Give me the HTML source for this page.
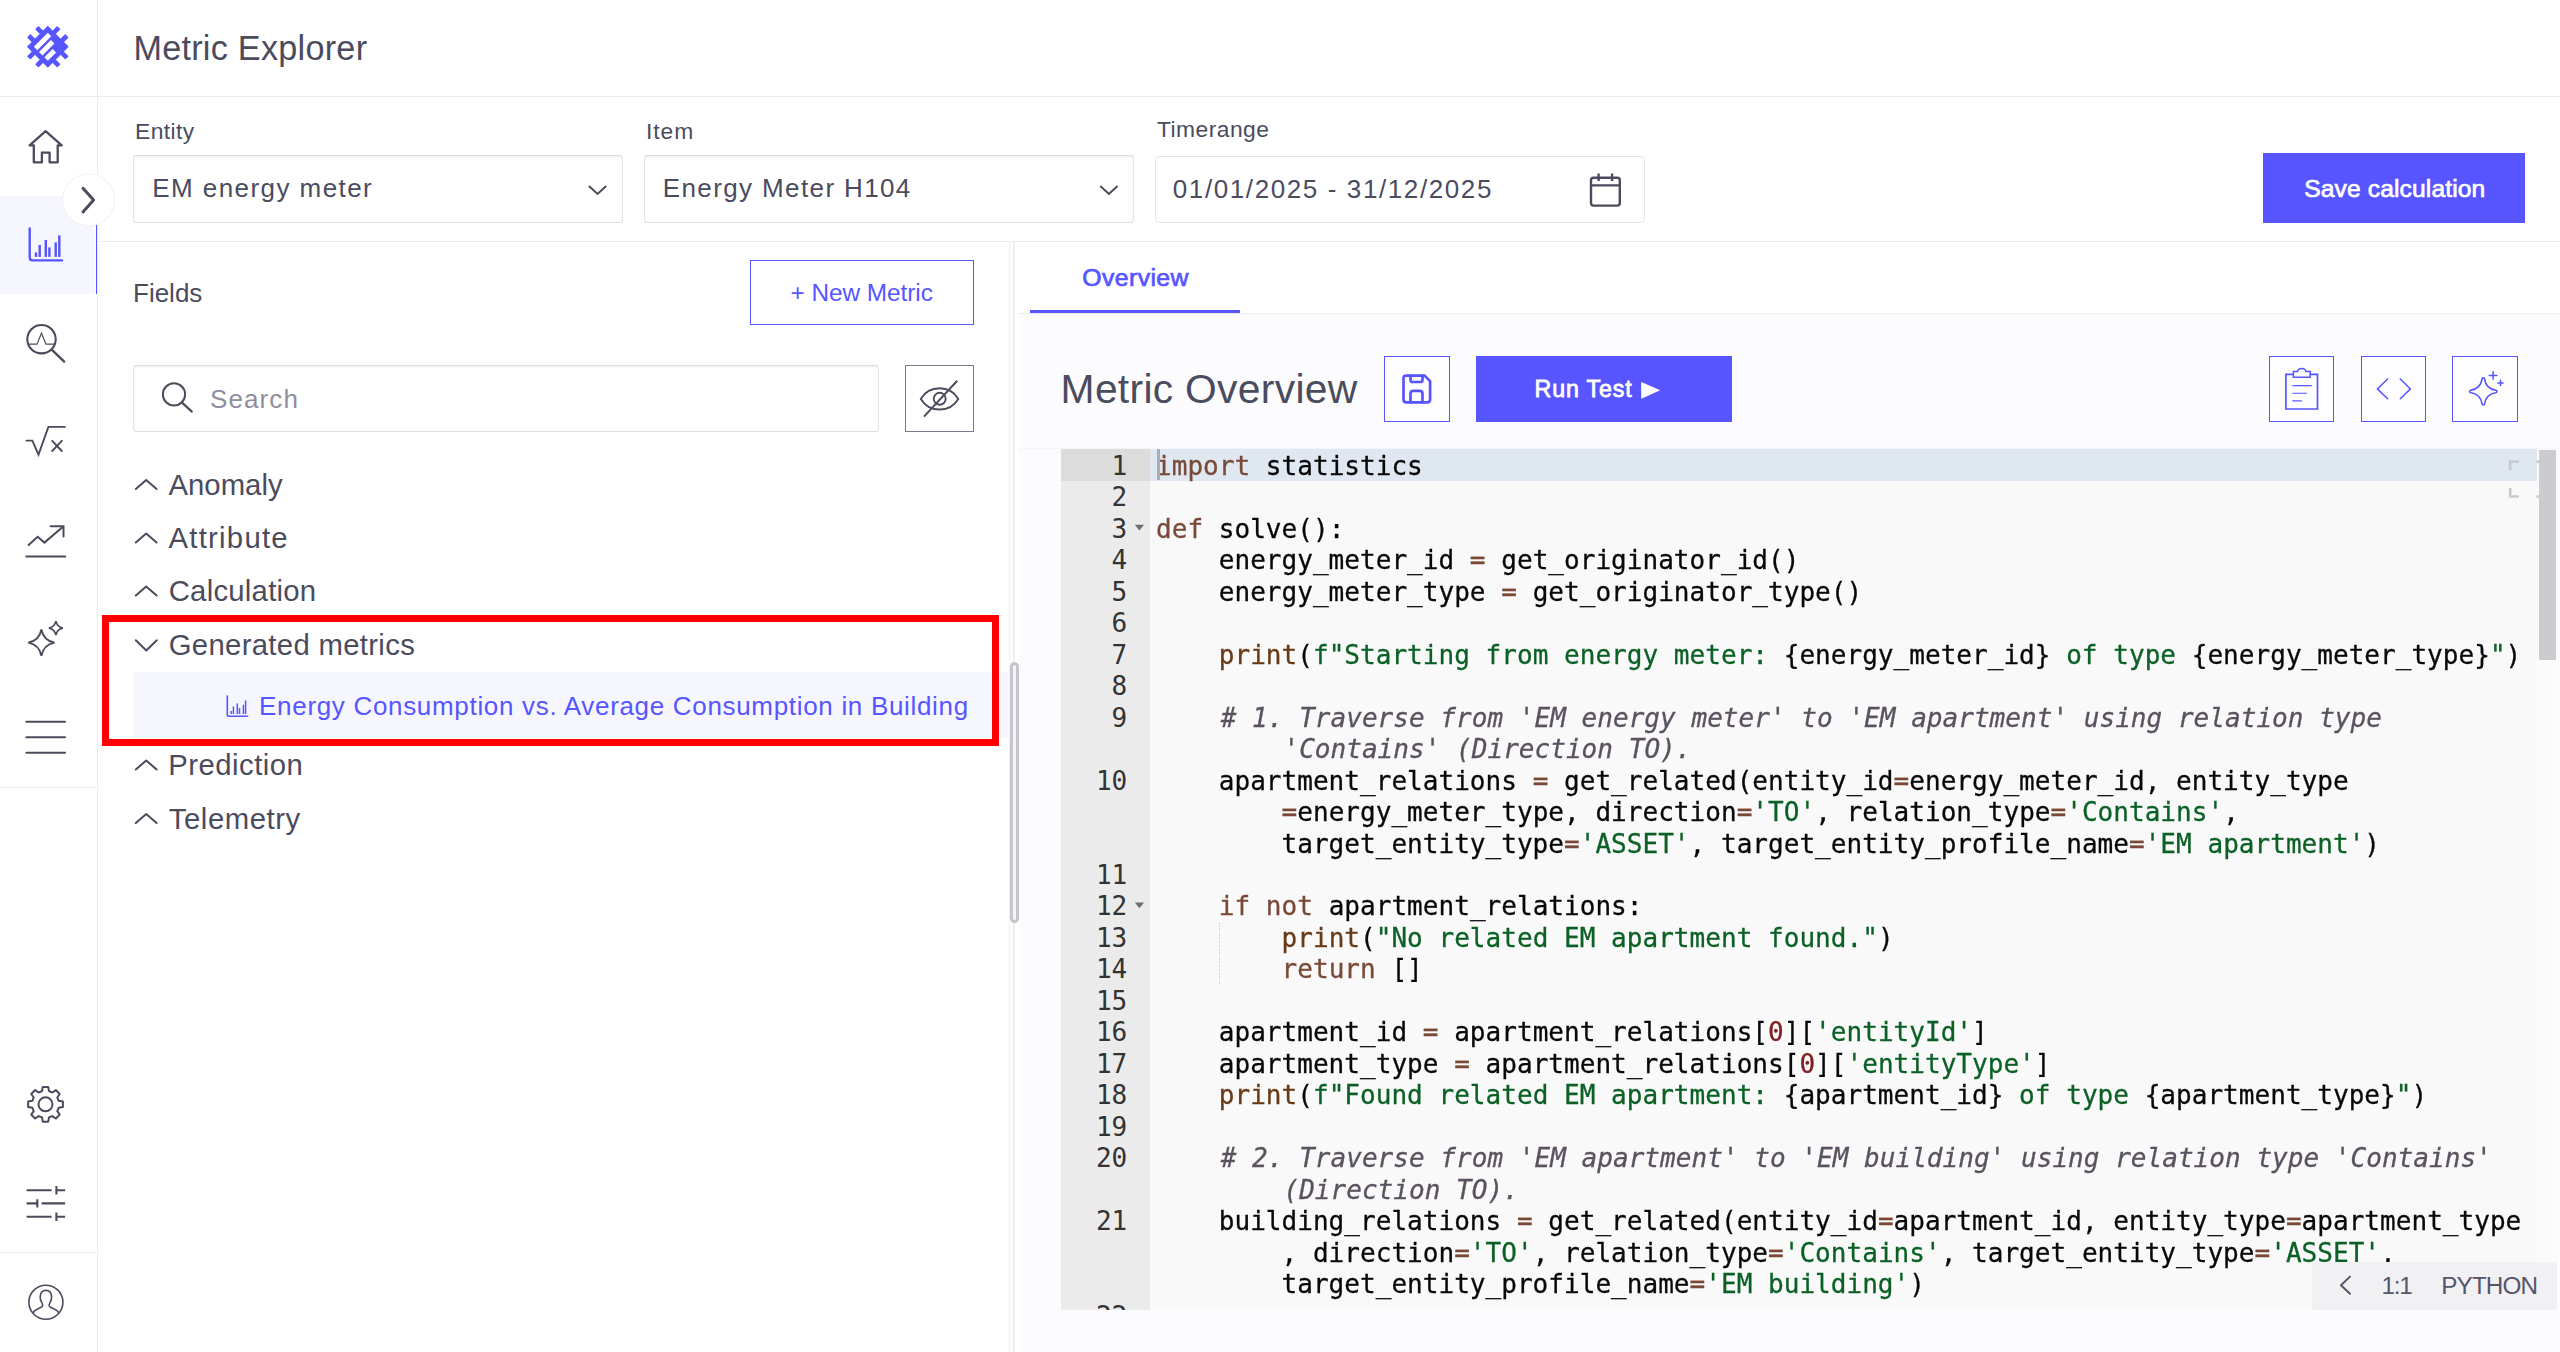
<!DOCTYPE html>
<html lang="en"><head><meta charset="utf-8"><title>Metric Explorer</title>
<style>
html,body{margin:0;padding:0;}
body{width:2560px;height:1352px;overflow:hidden;background:#fff;position:relative;font-family:"Liberation Sans",Arial,sans-serif;color:#4b4b5e;}
.t{position:absolute;white-space:nowrap;display:block;margin:0;padding:0;font-weight:400;}
.b{position:absolute;box-sizing:border-box;}
svg{position:absolute;left:0;top:0;overflow:visible;}
#code{position:absolute;left:1061px;top:449px;width:1496px;height:861px;overflow:hidden;background:#f9f9f9;}
#gut{position:absolute;left:0;top:0;width:89px;height:861px;background:#ebebeb;}
.r{position:absolute;left:0;height:31.475px;line-height:31.475px;white-space:pre;font-family:"DejaVu Sans Mono","Liberation Mono",monospace;font-size:27.4px;color:#080808;-webkit-text-stroke:0.3px;}
.ln{position:absolute;left:0;width:66.3px;text-align:right;height:31.475px;line-height:31.475px;font-family:"DejaVu Sans Mono","Liberation Mono",monospace;font-size:27.4px;color:#333;white-space:pre;transform:scaleX(0.9516);transform-origin:100% 0;}
#rows{position:absolute;left:95px;top:0;transform:scaleX(0.9516);transform-origin:0 0;}
#lns{position:absolute;left:0;top:0;width:66.3px;}
.k{color:#794938}.s{color:#0b6125}.c{color:#5a525f;font-style:italic;position:relative;left:2px}.n{color:#811f24}.f{color:#693a17}

</style></head><body>
<nav aria-label="Main navigation">
<div class="b" style="left:97px;top:0px;width:1px;height:1352px;background:#ededf0;"></div>
<div class="b" style="left:0px;top:787px;width:97px;height:1px;background:#ededf0;"></div>
<div class="b" style="left:0px;top:1252px;width:97px;height:1px;background:#ededf0;"></div>
<div class="b" style="left:0px;top:196px;width:95.4px;height:98px;background:#f6f6ff;"></div>
<div class="b" style="left:96px;top:196px;width:1.4px;height:98px;background:#5755ff;"></div>
</nav>
<header>
<div class="b" style="left:0px;top:96px;width:2560px;height:1px;background:#ededf0;"></div>
<h1 class="t" style="left:133.40px;top:30.65px;font-size:34.2px;line-height:34.2px;color:#4b4b5e;letter-spacing:0.27px;">Metric Explorer</h1>
</header>
<section aria-label="Filters">
<div class="b" style="left:98px;top:241px;width:2462px;height:1px;background:#ededf0;"></div>
<label class="t" style="left:135.10px;top:119.70px;font-size:22.8px;line-height:22.8px;color:#4b4b5e;letter-spacing:0.41px;">Entity</label>
<label class="t" style="left:645.90px;top:119.70px;font-size:22.8px;line-height:22.8px;color:#4b4b5e;letter-spacing:1.0px;">Item</label>
<label class="t" style="left:1156.90px;top:118.40px;font-size:22.8px;line-height:22.8px;color:#4b4b5e;letter-spacing:0.49px;">Timerange</label>
<div class="b" style="left:133px;top:154.8px;width:490px;height:68.2px;background:#fff;border:1px solid #e4e4e9;border-top-color:#dcdce2;border-bottom-color:#dedee4;border-radius:3px;box-shadow:inset 0 1px 2px rgba(60,60,90,0.09);"></div>
<div class="b" style="left:644px;top:154.8px;width:490px;height:68.2px;background:#fff;border:1px solid #e4e4e9;border-top-color:#dcdce2;border-bottom-color:#dedee4;border-radius:3px;box-shadow:inset 0 1px 2px rgba(60,60,90,0.09);"></div>
<div class="b" style="left:1155px;top:155.5px;width:490px;height:67px;background:#fff;border:1px solid #e6e6ea;border-radius:4px;"></div>
<span class="t" style="left:152.20px;top:175.19px;font-size:26px;line-height:26px;color:#4b4b5e;letter-spacing:1.44px;">EM energy meter</span>
<span class="t" style="left:662.80px;top:175.19px;font-size:26px;line-height:26px;color:#4b4b5e;letter-spacing:1.38px;">Energy Meter H104</span>
<span class="t" style="left:1172.80px;top:176.19px;font-size:26px;line-height:26px;color:#4b4b5e;letter-spacing:1.6px;">01/01/2025 - 31/12/2025</span>
<div class="b" style="left:2263px;top:153px;width:262px;height:70px;background:#5755ff;"></div>
<span class="t" style="left:2304.30px;top:176.68px;font-size:24.6px;line-height:24.6px;color:#fff;letter-spacing:0.12px;-webkit-text-stroke:0.7px #fff;">Save calculation</span>
</section>
<div class="b" style="left:1009px;top:242px;width:1px;height:1110px;background:#f0f0f2;"></div>
<div class="b" style="left:1013px;top:242px;width:2px;height:1110px;background:#efeff2;"></div>
<aside aria-label="Fields">
<h2 class="t" style="left:133.00px;top:279.79px;font-size:26px;line-height:26px;color:#4b4b5e;">Fields</h2>
<div class="b" style="left:750px;top:260px;width:224px;height:65px;border:1.3px solid #5755ff;background:#fff;"></div>
<span class="t" style="left:790.50px;top:281.35px;font-size:24.4px;line-height:24.4px;color:#5755ff;letter-spacing:-0.06px;">+ New Metric</span>
<div class="b" style="left:133px;top:364.6px;width:746px;height:67px;background:#fff;border:1px solid #e4e4e9;border-top-color:#dcdce2;border-bottom-color:#dedee4;border-radius:3px;box-shadow:inset 0 1px 2px rgba(60,60,90,0.09);"></div>
<span class="t" style="left:210.00px;top:386.29px;font-size:26px;line-height:26px;color:#8e8ea0;letter-spacing:1.1px;">Search</span>
<div class="b" style="left:905px;top:365px;width:69px;height:66.8px;border:1.2px solid #7a7a8e;background:#fff;"></div>
<span class="t" style="left:168.50px;top:470.20px;font-size:29.3px;line-height:29.3px;color:#4b4b5e;letter-spacing:0.02px;">Anomaly</span>
<span class="t" style="left:168.50px;top:523.30px;font-size:29.3px;line-height:29.3px;color:#4b4b5e;letter-spacing:1.25px;">Attribute</span>
<span class="t" style="left:168.70px;top:575.80px;font-size:29.3px;line-height:29.3px;color:#4b4b5e;letter-spacing:0.25px;">Calculation</span>
<span class="t" style="left:168.70px;top:629.80px;font-size:29.3px;line-height:29.3px;color:#4b4b5e;letter-spacing:0.32px;">Generated metrics</span>
<span class="t" style="left:168.20px;top:750.20px;font-size:29.3px;line-height:29.3px;color:#4b4b5e;letter-spacing:0.49px;">Prediction</span>
<span class="t" style="left:168.80px;top:804.30px;font-size:29.3px;line-height:29.3px;color:#4b4b5e;letter-spacing:0.55px;">Telemetry</span>
<div class="b" style="left:133px;top:672px;width:877px;height:66px;background:#f6f6ff;"></div>
<span class="t" style="left:259.10px;top:692.99px;font-size:26px;line-height:26px;color:#5755ff;letter-spacing:0.68px;">Energy Consumption vs. Average Consumption in Building</span>
<div class="b" style="left:102px;top:615px;width:897.2px;height:130.5px;border:7px solid #ff0000;"></div>
<div class="b" style="left:1010px;top:662px;width:9px;height:261px;background:#f4f4f6;border:3px solid #c5c5cd;border-radius:4.5px;"></div>
</aside>
<main>
<div class="b" style="left:1019px;top:314px;width:1541px;height:1038px;background:#fcfcfe;"></div>
<div class="b" style="left:1019px;top:448px;width:1541px;height:1px;background:#f5f5f8;"></div>
<div class="b" style="left:1019px;top:313px;width:1541px;height:1px;background:#ededf0;"></div>
<div class="b" style="left:1030px;top:310px;width:210px;height:3px;background:#5755ff;"></div>
<span class="t" style="left:1082.30px;top:266.11px;font-size:24.8px;line-height:24.8px;color:#5755ff;letter-spacing:0.4px;-webkit-text-stroke:0.7px #5755ff;">Overview</span>
<h2 class="t" style="left:1060.60px;top:368.56px;font-size:40.8px;line-height:40.8px;color:#4b4b5e;letter-spacing:0.3px;">Metric Overview</h2>
<div class="b" style="left:1384px;top:356px;width:66px;height:66px;border:1.3px solid #5755ff;background:#fdfdff;"></div>
<div class="b" style="left:1476px;top:356px;width:256px;height:66px;background:#5755ff;"></div>
<span class="t" style="left:1534.60px;top:377.96px;font-size:23.2px;line-height:23.2px;color:#fff;letter-spacing:0.85px;-webkit-text-stroke:0.8px #fff;">Run Test</span>
<span class="t" style="left:1641.40px;top:377.65px;font-size:21.8px;line-height:21.8px;color:#fff;font-family:'DejaVu Sans',sans-serif;transform:scaleX(1.13);transform-origin:0 0;">▶</span>
<div class="b" style="left:2269px;top:356px;width:65px;height:66px;border:1.3px solid #5755ff;background:#fdfdff;"></div>
<div class="b" style="left:2361px;top:356px;width:65px;height:66px;border:1.3px solid #5755ff;background:#fdfdff;"></div>
<div class="b" style="left:2452px;top:356px;width:66px;height:66px;border:1.3px solid #5755ff;background:#fdfdff;"></div>
<div id="code">
<div class="b" style="left:89px;top:0;width:1387px;height:31.8px;background:#dfe7f1;"></div>
<div id="gut">
<div class="b" style="left:0;top:0;width:89px;height:31.8px;background:#dcdcdc;"></div>
</div>
<div id="lns">
<div class="ln" style="top:0.80px">1</div>
<div class="ln" style="top:32.27px">2</div>
<div class="ln" style="top:63.75px">3</div>
<div class="ln" style="top:95.23px">4</div>
<div class="ln" style="top:126.70px">5</div>
<div class="ln" style="top:158.18px">6</div>
<div class="ln" style="top:189.65px">7</div>
<div class="ln" style="top:221.13px">8</div>
<div class="ln" style="top:252.60px">9</div>
<div class="ln" style="top:315.55px">10</div>
<div class="ln" style="top:409.98px">11</div>
<div class="ln" style="top:441.45px">12</div>
<div class="ln" style="top:472.93px">13</div>
<div class="ln" style="top:504.40px">14</div>
<div class="ln" style="top:535.88px">15</div>
<div class="ln" style="top:567.35px">16</div>
<div class="ln" style="top:598.82px">17</div>
<div class="ln" style="top:630.30px">18</div>
<div class="ln" style="top:661.77px">19</div>
<div class="ln" style="top:693.25px">20</div>
<div class="ln" style="top:756.20px">21</div>
<div class="ln" style="top:850.62px">22</div>
</div>
<div id="rows">
<div class="r" style="top:0.80px"><span class="k">import</span> statistics</div>
<div class="r" style="top:63.75px"><span class="k">def</span> solve():</div>
<div class="r" style="top:95.23px">    energy_meter_id <span class="k">=</span> get_originator_id()</div>
<div class="r" style="top:126.70px">    energy_meter_type <span class="k">=</span> get_originator_type()</div>
<div class="r" style="top:189.65px">    <span class="f">print</span>(<span class="s">f&quot;Starting from energy meter: </span>{energy_meter_id}<span class="s"> of type </span>{energy_meter_type}<span class="s">&quot;</span>)</div>
<div class="r" style="top:252.60px">    <span class="c"># 1. Traverse from &#x27;EM energy meter&#x27; to &#x27;EM apartment&#x27; using relation type</span></div>
<div class="r" style="top:284.08px">        <span class="c">&#x27;Contains&#x27; (Direction TO).</span></div>
<div class="r" style="top:315.55px">    apartment_relations <span class="k">=</span> get_related(entity_id<span class="k">=</span>energy_meter_id, entity_type</div>
<div class="r" style="top:347.03px">        <span class="k">=</span>energy_meter_type, direction<span class="k">=</span><span class="s">&#x27;TO&#x27;</span>, relation_type<span class="k">=</span><span class="s">&#x27;Contains&#x27;</span>,</div>
<div class="r" style="top:378.50px">        target_entity_type<span class="k">=</span><span class="s">&#x27;ASSET&#x27;</span>, target_entity_profile_name<span class="k">=</span><span class="s">&#x27;EM apartment&#x27;</span>)</div>
<div class="r" style="top:441.45px">    <span class="k">if</span> <span class="k">not</span> apartment_relations:</div>
<div class="r" style="top:472.93px">        <span class="f">print</span>(<span class="s">&quot;No related EM apartment found.&quot;</span>)</div>
<div class="r" style="top:504.40px">        <span class="k">return</span> []</div>
<div class="r" style="top:567.35px">    apartment_id <span class="k">=</span> apartment_relations[<span class="n">0</span>][<span class="s">&#x27;entityId&#x27;</span>]</div>
<div class="r" style="top:598.82px">    apartment_type <span class="k">=</span> apartment_relations[<span class="n">0</span>][<span class="s">&#x27;entityType&#x27;</span>]</div>
<div class="r" style="top:630.30px">    <span class="f">print</span>(<span class="s">f&quot;Found related EM apartment: </span>{apartment_id}<span class="s"> of type </span>{apartment_type}<span class="s">&quot;</span>)</div>
<div class="r" style="top:693.25px">    <span class="c"># 2. Traverse from &#x27;EM apartment&#x27; to &#x27;EM building&#x27; using relation type &#x27;Contains&#x27;</span></div>
<div class="r" style="top:724.73px">        <span class="c">(Direction TO).</span></div>
<div class="r" style="top:756.20px">    building_relations <span class="k">=</span> get_related(entity_id<span class="k">=</span>apartment_id, entity_type<span class="k">=</span>apartment_type</div>
<div class="r" style="top:787.67px">        , direction<span class="k">=</span><span class="s">&#x27;TO&#x27;</span>, relation_type<span class="k">=</span><span class="s">&#x27;Contains&#x27;</span>, target_entity_type<span class="k">=</span><span class="s">&#x27;ASSET&#x27;</span>,</div>
<div class="r" style="top:819.15px">        target_entity_profile_name<span class="k">=</span><span class="s">&#x27;EM building&#x27;</span>)</div>
</div>
<div class="b" style="left:96px;top:0;width:3px;height:31.43px;background:#a9adb8;"></div>
<div class="b" style="left:157.6px;top:474.12px;width:1.2px;height:60.95px;background:repeating-linear-gradient(to bottom,#cfcfbf 0,#cfcfbf 1.2px,transparent 1.2px,transparent 2.4px);"></div>
<div class="b" style="left:1476px;top:0;width:20px;height:861px;background:#fbfbfc;"></div>
<div class="b" style="left:1478.2px;top:1px;width:16.8px;height:210px;background:#cbcbd0;"></div>
<div class="b" style="left:1251px;top:813px;width:245px;height:48px;background:#f1f1f4;"></div>
</div>
<span class="t" style="left:2381.50px;top:1273.73px;font-size:24.3px;line-height:24.3px;color:#55556a;letter-spacing:-1.2px;">1:1</span>
<span class="t" style="left:2441.30px;top:1273.73px;font-size:24.3px;line-height:24.3px;color:#55556a;letter-spacing:-0.9px;">PYTHON</span>
</main>
<svg width="2560" height="1352" viewBox="0 0 2560 1352" fill="none" stroke-linecap="round" stroke-linejoin="round">
<g transform="translate(47.8 46.8) rotate(-45)" fill="#5755ff" stroke="none">
<rect x="-14.8" y="-14.8" width="29.6" height="29.6"/>
<rect x="-8.05" y="-21.3" width="4.7" height="42.6"/>
<rect x="-21.3" y="-8.05" width="42.6" height="4.7"/>
<rect x="3.35" y="-21.3" width="4.7" height="42.6"/>
<rect x="-21.3" y="3.35" width="42.6" height="4.7"/>
<rect x="-9.85" y="-9.85" width="19.7" height="4.85" fill="#fff"/>
<rect x="-9.85" y="-2.6" width="16.9" height="4.9" fill="#fff"/>
<rect x="-9.85" y="5" width="11.65" height="4.85" fill="#fff"/>
</g>
<path d="M29.6 145.4 L45.6 131.2 L61.7 145.4 H57.7 V162.3 H49.6 V152.6 H41.9 V162.3 H33.8 V145.4 Z" stroke="#4b4b5e" stroke-width="2.3" stroke-linejoin="round"/>
<circle cx="88.6" cy="199.9" r="26" fill="#fff" stroke="#f0f0f2" stroke-width="1"/>
<path d="M83 188.3 L93.6 200.1 L83 212" stroke="#4b4b5e" stroke-width="3"/>
<path d="M29.7 228.4 V257.5 Q29.7 260.4 32.6 260.4 H62" stroke="#5755ff" stroke-width="2.4"/>
<rect x="34.8" y="252.4" width="2.4" height="4.5" fill="#5755ff" stroke="none"/>
<rect x="38.5" y="245" width="2.4" height="11.9" fill="#5755ff" stroke="none"/>
<rect x="44.599999999999994" y="240" width="2.4" height="16.9" fill="#5755ff" stroke="none"/>
<rect x="48.199999999999996" y="247.4" width="2.4" height="9.5" fill="#5755ff" stroke="none"/>
<rect x="54.5" y="242.4" width="2.4" height="14.5" fill="#5755ff" stroke="none"/>
<rect x="58.099999999999994" y="235.4" width="2.4" height="21.5" fill="#5755ff" stroke="none"/>
<circle cx="41.5" cy="339.2" r="14.2" stroke="#4b4b5e" stroke-width="2.1"/>
<path d="M52 349.8 L64.2 361.6" stroke="#4b4b5e" stroke-width="2.3"/>
<path d="M28.3 344.2 H37 L41.5 333 L45.9 344.2 H54.6" stroke="#4b4b5e" stroke-width="1.2" stroke-linejoin="miter"/>
<path d="M26.4 440.6 H32.4 L38.5 454.6 L48.4 426.9 H64.8" stroke="#4b4b5e" stroke-width="1.9" stroke-linejoin="miter"/>
<path d="M52.2 440.8 L61.8 451 M61.8 440.8 L52.2 451" stroke="#4b4b5e" stroke-width="1.9"/>
<path d="M28.6 545 L37.7 536.8 L44.4 542.6 L63 526.8 M50.6 526.3 H63.5 V536.4" stroke="#4b4b5e" stroke-width="2" stroke-linejoin="miter"/>
<path d="M26.2 556.5 H65.2" stroke="#4b4b5e" stroke-width="2"/>
<path d="M41.4 629.5 Q43.5222 640.4778 54.5 642.6 Q43.5222 644.7222 41.4 655.7 Q39.2778 644.7222 28.299999999999997 642.6 Q39.2778 640.4778 41.4 629.5 Z" stroke="#4b4b5e" stroke-width="1.9" stroke-linejoin="miter"/>
<path d="M55.9 621.2 Q57.034 627.066 62.9 628.2 Q57.034 629.3340000000001 55.9 635.2 Q54.766 629.3340000000001 48.9 628.2 Q54.766 627.066 55.9 621.2 Z" stroke="#4b4b5e" stroke-width="1.7" stroke-linejoin="miter"/>
<path d="M26.4 721.7 H65" stroke="#4b4b5e" stroke-width="2.1"/>
<path d="M26.4 737.2 H65" stroke="#4b4b5e" stroke-width="2.1"/>
<path d="M26.4 752.7 H65" stroke="#4b4b5e" stroke-width="2.1"/>
<path d="M42.75 1086.92 L48.25 1086.92 L48.99 1091.15 L52.33 1092.54 L55.85 1090.06 L59.74 1093.95 L57.26 1097.47 L58.65 1100.81 L62.88 1101.55 L62.88 1107.05 L58.65 1107.79 L57.26 1111.13 L59.74 1114.65 L55.85 1118.54 L52.33 1116.06 L48.99 1117.45 L48.25 1121.68 L42.75 1121.68 L42.01 1117.45 L38.67 1116.06 L35.15 1118.54 L31.26 1114.65 L33.74 1111.13 L32.35 1107.79 L28.12 1107.05 L28.12 1101.55 L32.35 1100.81 L33.74 1097.47 L31.26 1093.95 L35.15 1090.06 L38.67 1092.54 L42.01 1091.15 Z" stroke="#4b4b5e" stroke-width="2" stroke-linejoin="round"/>
<circle cx="45.5" cy="1104.3" r="7" stroke="#4b4b5e" stroke-width="2"/>
<path d="M26.6 1190.3 H51.6 M56.4 1186.1 V1194.5 M56.4 1190.3 H65.1" stroke="#4b4b5e" stroke-width="2.1" stroke-linecap="butt"/>
<path d="M26.6 1216.7 H51.6 M56.4 1212.5 V1220.9 M56.4 1216.7 H65.1" stroke="#4b4b5e" stroke-width="2.1" stroke-linecap="butt"/>
<path d="M26.6 1203.4 H37.3 M37.3 1199.2 V1207.6 M41.6 1203.4 H65.1" stroke="#4b4b5e" stroke-width="2.1" stroke-linecap="butt"/>
<circle cx="45.9" cy="1302.2" r="17" stroke="#4b4b5e" stroke-width="1.6"/>
<path d="M33.2 1312.6 C35 1309 40.5 1308.6 42.4 1306.2 C43 1305.3 42.6 1304 41.8 1302.6 C40.4 1300.4 40 1298.4 40.2 1296.4 C40.5 1292.6 42.8 1290.4 45.9 1290.4 C49 1290.4 51.3 1292.6 51.6 1296.4 C51.8 1298.4 51.4 1300.4 50 1302.6 C49.2 1304 48.8 1305.3 49.4 1306.2 C51.3 1308.6 56.8 1309 58.6 1312.6" stroke="#4b4b5e" stroke-width="1.6"/>
<path d="M588.90 185.9 L597.55 193.9 L606.20 185.9" stroke="#4b4b5e" stroke-width="2.05" stroke-linecap="butt" stroke-linejoin="miter"/>
<path d="M1100.25 185.9 L1108.90 193.9 L1117.55 185.9" stroke="#4b4b5e" stroke-width="2.05" stroke-linecap="butt" stroke-linejoin="miter"/>
<rect x="1591" y="177.8" width="28.8" height="27.8" rx="2.5" stroke="#4b4b5e" stroke-width="2.4"/>
<path d="M1591 185.4 H1619.8 M1598.6 173.6 V181 M1612.1 173.6 V181" stroke="#4b4b5e" stroke-width="2.4" stroke-linecap="butt"/>
<circle cx="174" cy="394.4" r="11.1" stroke="#4b4b5e" stroke-width="2"/>
<path d="M182 402.6 L191.8 411.6" stroke="#4b4b5e" stroke-width="2.2"/>
<path d="M920.8 398.9 A21.9 21.9 0 0 1 958.3 398.9 A21.9 21.9 0 0 1 920.8 398.9 Z" stroke="#4b4b5e" stroke-width="1.9" stroke-linejoin="miter"/>
<circle cx="939.7" cy="398.8" r="6" stroke="#4b4b5e" stroke-width="1.9"/>
<path d="M924 416.6 L957.2 380.8" stroke="#4b4b5e" stroke-width="2" stroke-linecap="butt"/>
<path d="M135.8 489.0 L146.2 480.0 L156.6 489.0" stroke="#4b4b5e" stroke-width="2"/>
<path d="M135.8 542.5 L146.2 533.5 L156.6 542.5" stroke="#4b4b5e" stroke-width="2"/>
<path d="M135.8 595.5 L146.2 586.5 L156.6 595.5" stroke="#4b4b5e" stroke-width="2"/>
<path d="M135.8 640.3 L146.3 650.5 L156.8 640.3" stroke="#4b4b5e" stroke-width="2"/>
<path d="M135.8 769.5 L146.2 760.5 L156.6 769.5" stroke="#4b4b5e" stroke-width="2"/>
<path d="M135.8 823.0 L146.2 814.0 L156.6 823.0" stroke="#4b4b5e" stroke-width="2"/>
<path d="M227.3 696 V714.4 Q227.3 716.2 229.1 716.2 H247.6" stroke="#5755ff" stroke-width="1.6"/>
<rect x="230.45" y="711" width="1.5" height="3.0" fill="#5755ff" stroke="none"/>
<rect x="232.65" y="706.4" width="1.5" height="7.6" fill="#5755ff" stroke="none"/>
<rect x="236.55" y="703.4" width="1.5" height="10.6" fill="#5755ff" stroke="none"/>
<rect x="238.75" y="708" width="1.5" height="6.0" fill="#5755ff" stroke="none"/>
<rect x="242.65" y="704.8" width="1.5" height="9.2" fill="#5755ff" stroke="none"/>
<rect x="244.85" y="700.4" width="1.5" height="13.6" fill="#5755ff" stroke="none"/>
<path d="M1405.6 375.6 H1424.5 L1430.2 381.3 V1400 Z" stroke="none"/>
<path d="M1406.3 375.6 H1424.6 L1430.1 381.1 V399.6 Q1430.1 402.4 1427.3 402.4 H1406.3 Q1403.5 402.4 1403.5 399.6 V378.4 Q1403.5 375.6 1406.3 375.6 Z" stroke="#5755ff" stroke-width="2.7"/>
<path d="M1410.5 375.6 V380 Q1410.5 382 1412.5 382 H1420.5 Q1422.5 382 1422.5 380 V375.6" stroke="#5755ff" stroke-width="2.7"/>
<path d="M1410.5 402.4 V393.6 Q1410.5 390.8 1413.3 390.8 H1419.7 Q1422.5 390.8 1422.5 393.6 V402.4" stroke="#5755ff" stroke-width="2.7"/>
<path d="M2293 374.4 H2285.9 V409 H2317.5 V374.4 H2310.6" stroke="#5755ff" stroke-width="1.7" stroke-linejoin="miter"/>
<path d="M2293.4 377.2 V371.6 H2297.6 C2298 367.6 2305.4 367.6 2305.8 371.6 H2310.2 V377.2 Z" stroke="#5755ff" stroke-width="1.5" stroke-linejoin="miter"/>
<path d="M2292.4 385.6 H2311.8 M2292.4 393.3 H2306.8 M2292.4 400.9 H2301.8" stroke="#5755ff" stroke-width="1.1" stroke-linecap="butt"/>
<path d="M2387.6 379 L2377.4 388.9 L2387.6 398.8 M2400.3 379 L2410.4 388.9 L2400.3 398.8" stroke="#5755ff" stroke-width="1.5" stroke-linejoin="miter"/>
<path d="M2482.00 379.10 A1.3 1.3 0 0 1 2484.60 379.10 C2485.20 385.00 2489.70 389.50 2495.60 390.10 A1.3 1.3 0 0 1 2495.60 392.70 C2489.70 393.30 2485.20 397.80 2484.60 403.70 A1.3 1.3 0 0 1 2482.00 403.70 C2481.40 397.80 2476.90 393.30 2471.00 392.70 A1.3 1.3 0 0 1 2471.00 390.10 C2476.90 389.50 2481.40 385.00 2482.00 379.10 Z" stroke="#5755ff" stroke-width="1.6"/>
<path d="M2489.3 375.5 H2496.9 M2493.1 371.7 V379.3 M2497.9 382.9 H2503.1 M2500.5 380.3 V385.5" stroke="#5755ff" stroke-width="1.5"/>
<path d="M1134.8 524.8 H1144 L1139.4 530.5 Z" fill="#6e6e6e" stroke="none"/>
<path d="M1134.8 902.5 H1144 L1139.4 908.3 Z" fill="#6e6e6e" stroke="none"/>
<path d="M2510.2 469.9 V461.6 H2518.9 M2510.2 488 V496.5 H2518.9 M2536.4 461.6 H2539 M2536.4 496.5 H2539" stroke="#c9c9cf" stroke-width="2.7" stroke-linecap="butt" stroke-linejoin="miter"/>
<path d="M2350 1276.6 L2341 1285.2 L2350 1293.8" stroke="#55556a" stroke-width="2"/>
</svg>
</body></html>
